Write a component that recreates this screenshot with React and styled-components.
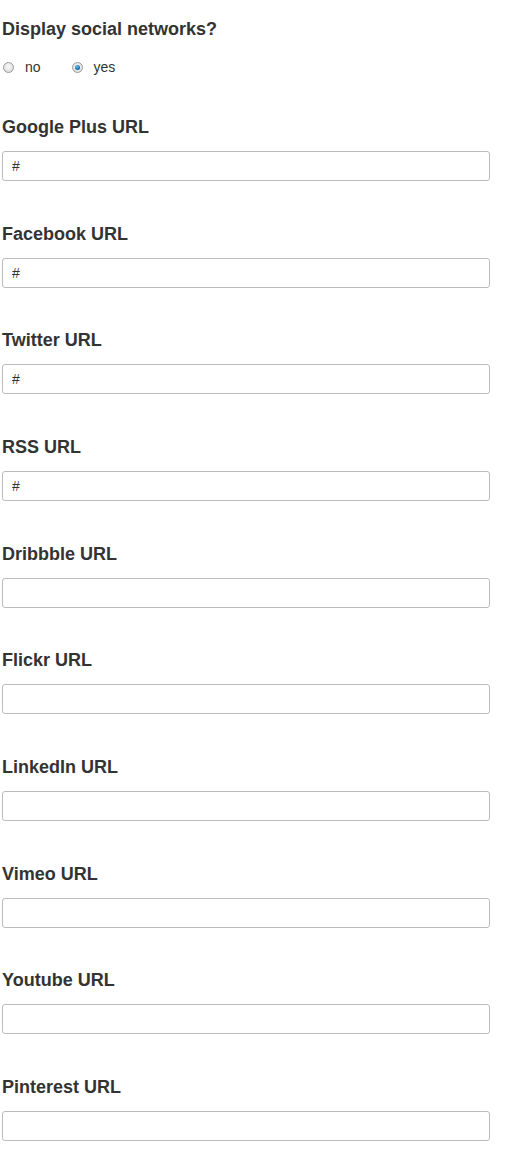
import React from "react";
import styled, { createGlobalStyle } from "styled-components";

const Global = createGlobalStyle`
  html, body { margin: 0; padding: 0; background: #fff; }
  body { font-family: "Liberation Sans", Arial, sans-serif; color: #333; }
`;

const Page = styled.div`
  width: 488px;
  padding: 19px 0 0 2px;
`;

const Title = styled.h3`
  margin: 0;
  font-size: 18px;
  line-height: 20px;
  font-weight: bold;
  color: #333;
`;

const RadioRow = styled.div`
  display: flex;
  align-items: center;
  margin-top: 18px;
  margin-bottom: 40px;
  height: 20px;
`;

const RadioLabel = styled.label`
  display: flex;
  align-items: center;
  font-size: 14px;
  color: #333;
  margin-right: 30px;
  margin-left: 1px;
`;

const Radio = styled.input.attrs({ type: "radio" })`
  appearance: none;
  -webkit-appearance: none;
  width: 11px;
  height: 11px;
  margin: 0 11px 0 0;
  border-radius: 50%;
  border: 1px solid #9a9a9a;
  background: radial-gradient(circle at 50% 40%, #fafafa 0%, #e4e4e4 60%, #cfcfcf 100%);
  position: relative;
  flex: none;
  &:checked::after {
    content: "";
    position: absolute;
    left: 2px;
    top: 2px;
    width: 5px;
    height: 5px;
    border-radius: 50%;
    background: radial-gradient(circle at 40% 35%, #6ec0ee 0%, #1a78b5 55%, #0d4f7d 100%);
  }
`;

const Field = styled.div`
  margin-bottom: 42.67px;
`;

const Label = styled.label`
  display: block;
  font-size: 18px;
  line-height: 20px;
  font-weight: bold;
  color: #333;
  margin-bottom: 14px;
`;

const TextInput = styled.input.attrs({ type: "text" })`
  display: block;
  box-sizing: border-box;
  width: 488px;
  height: 30px;
  border: 1px solid #bcbcbc;
  border-radius: 3px;
  padding: 0 9px;
  font-family: "Liberation Sans", Arial, sans-serif;
  font-size: 14px;
  color: #333;
  background: #fff;
  outline: none;
`;

const fields = [
  ["Google Plus URL", "#"],
  ["Facebook URL", "#"],
  ["Twitter URL", "#"],
  ["RSS URL", "#"],
  ["Dribbble URL", ""],
  ["Flickr URL", ""],
  ["LinkedIn URL", ""],
  ["Vimeo URL", ""],
  ["Youtube URL", ""],
  ["Pinterest URL", ""],
];

export default function App() {
  return (
    <>
      <Global />
      <Page>
        <Title>Display social networks?</Title>
        <RadioRow>
          <RadioLabel>
            <Radio name="social" />
            no
          </RadioLabel>
          <RadioLabel>
            <Radio name="social" defaultChecked />
            yes
          </RadioLabel>
        </RadioRow>
        {fields.map(([label, value]) => (
          <Field key={label}>
            <Label>{label}</Label>
            <TextInput defaultValue={value} />
          </Field>
        ))}
      </Page>
    </>
  );
}
